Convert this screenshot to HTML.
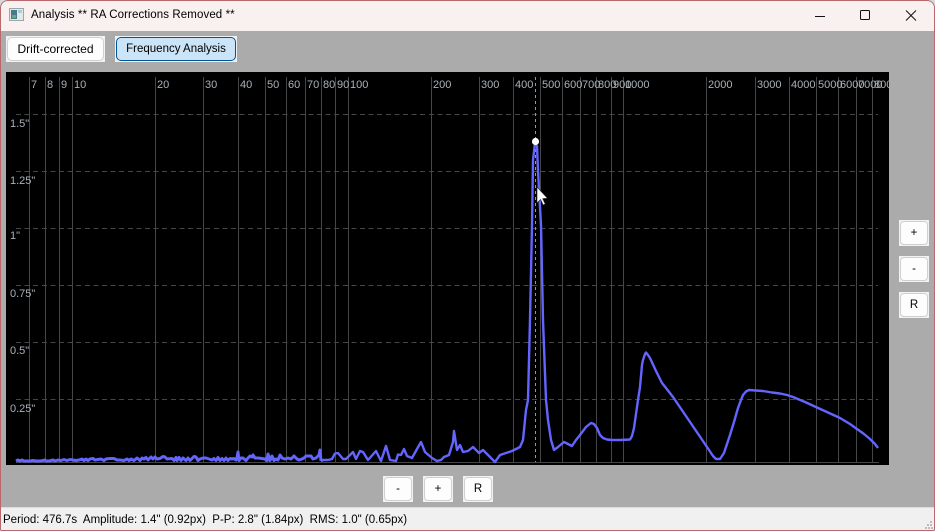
<!DOCTYPE html>
<html><head><meta charset="utf-8"><style>
html,body{margin:0;padding:0;background:#fff;overflow:hidden}
#w{position:relative;width:935px;height:531px;overflow:hidden;background:#d8d8d8}
#win{position:absolute;left:0;top:0;width:933px;height:529px;border:1px solid #b8696e;border-radius:8px 8px 2px 2px;background:#ababab;overflow:hidden}
#title{position:absolute;left:0;top:0;width:933px;height:30px;background:#f9f0f0}
.t{position:absolute;font-family:"Liberation Sans",sans-serif;white-space:nowrap;color:#000}
.h{position:absolute;box-sizing:border-box;background:#f2f2f2;padding:1px}
.b{box-sizing:border-box;width:100%;height:100%;background:#fdfdfd;border:1px solid #d0d0d0;border-radius:4px;font:11.5px "Liberation Sans",sans-serif;text-align:center;color:#000}
#status{position:absolute;left:0;top:506px;width:933px;height:23px;background:#f0f0f0;border-top:1px solid #dcdcdc;box-sizing:border-box}
svg{position:absolute;left:0;top:0}
</style></head><body><div id="w">
<div id="win">
<div id="title"></div>
<svg width="16" height="14" style="left:8px;top:7px"><rect x="0.5" y="0.5" width="14" height="12" fill="#e4e8e8" stroke="#9aa6aa"/><rect x="2" y="2" width="6" height="9" fill="#4a7a86"/><rect x="9" y="2" width="4" height="3" fill="#a8cdd8"/><rect x="3" y="7" width="4" height="3" fill="#6aa884"/></svg>
<div class="t" style="left:30px;top:8px;font-size:11.5px;letter-spacing:.1px">Analysis ** RA Corrections Removed **</div>
<svg width="933" height="30" fill="none" stroke="#111">
<path d="M814 15.5h10" stroke-width="1"/>
<rect x="859.500" y="9.500" width="9" height="9" rx="1"/>
<path d="M905 9.500l10 10M915 9.500l-10 10"/>
</svg>
<div class="h" style="left:5px;top:35px;width:99px;height:26px"><div class="b" style="line-height:22px;font-size:12px;border-radius:5px">Drift-corrected</div></div>
<div class="h" style="left:114px;top:35px;width:122px;height:26px"><div class="b" style="line-height:22px;background:#cce4f7;border-color:#00549a;border-radius:5px">Frequency Analysis</div></div>
<div class="h" style="left:382px;top:475px;width:30px;height:26px"><div class="b" style="line-height:22px">-</div></div>
<div class="h" style="left:422px;top:475px;width:30px;height:26px"><div class="b" style="line-height:22px">+</div></div>
<div class="h" style="left:462px;top:475px;width:30px;height:26px"><div class="b" style="line-height:22px">R</div></div>
<div class="h" style="left:898px;top:219px;width:30px;height:26px"><div class="b" style="line-height:22px">+</div></div>
<div class="h" style="left:898px;top:255px;width:30px;height:26px"><div class="b" style="line-height:22px">-</div></div>
<div class="h" style="left:898px;top:291px;width:30px;height:26px"><div class="b" style="line-height:22px">R</div></div>
<div id="status"><div class="t" style="left:2px;top:6px;font-size:11.5px">Period: 476.7s&nbsp; Amplitude: 1.4" (0.92px)&nbsp; P-P: 2.8" (1.84px)&nbsp; RMS: 1.0" (0.65px)</div></div>
<svg width="8" height="8" style="left:924px;top:520px" fill="#bdbdbd"><rect x="5" y="0" width="2" height="2"/><rect x="2" y="3" width="2" height="2"/><rect x="5" y="3" width="2" height="2"/><rect x="0" y="6" width="2" height="2"/><rect x="3" y="6" width="2" height="2"/><rect x="6" y="6" width="2" height="2"/></svg>
</div>
<svg width="935" height="531" viewBox="0 0 935 531" font-family="Liberation Sans, sans-serif" font-size="11" style="left:0;top:0">
<defs><clipPath id="c"><rect x="6" y="72" width="883" height="393"/></clipPath></defs>
<rect x="6" y="72" width="883" height="393" fill="#000"/>
<g clip-path="url(#c)">
<g stroke="#464646" stroke-width="1" shape-rendering="crispEdges">
<path d="M29.5 77V462M45.5 77V462M59.5 77V462M72.5 77V462M155.5 77V462M203.5 77V462M238.5 77V462M265.5 77V462M286.5 77V462M305.5 77V462M321.5 77V462M335.5 77V462M348.5 77V462M431.5 77V462M479.5 77V462M513.5 77V462M540.5 77V462M562.5 77V462M580.5 77V462M596.5 77V462M611.5 77V462M623.5 77V462M706.5 77V462M755.5 77V462M789.5 77V462M816.5 77V462M838.5 77V462M856.5 77V462M872.5 77V462"/>
<path d="M16 462.5H879"/>
<path stroke-dasharray="5 3.6" d="M16 114.5H878M16 171.5H878M16 228.5H878M16 285.5H878M16 342.5H878M16 399.5H878"/>
</g>
<path d="M535.5 77V462" stroke="#a8a820" stroke-width="1" stroke-dasharray="3 3" shape-rendering="crispEdges"/>
<g fill="#aab2ba">
<text x="31" y="88">7</text><text x="47" y="88">8</text><text x="61" y="88">9</text><text x="74" y="88">10</text><text x="157" y="88">20</text><text x="205" y="88">30</text><text x="240" y="88">40</text><text x="267" y="88">50</text><text x="288" y="88">60</text><text x="307" y="88">70</text><text x="323" y="88">80</text><text x="337" y="88">90</text><text x="350" y="88">100</text><text x="433" y="88">200</text><text x="481" y="88">300</text><text x="515" y="88">400</text><text x="542" y="88">500</text><text x="564" y="88">600</text><text x="582" y="88">700</text><text x="598" y="88">800</text><text x="613" y="88">900</text><text x="625" y="88">1000</text><text x="708" y="88">2000</text><text x="757" y="88">3000</text><text x="791" y="88">4000</text><text x="818" y="88">5000</text><text x="840" y="88">6000</text><text x="858" y="88">7000</text><text x="874" y="88">8000</text>
<text x="10" y="127">1.5"</text><text x="10" y="184">1.25"</text><text x="10" y="239">1"</text><text x="10" y="297">0.75"</text><text x="10" y="354">0.5"</text><text x="10" y="412">0.25"</text>
</g>
<polyline fill="none" stroke="#6464ff" stroke-width="3" stroke-linejoin="round" points="16,461 18,460 20,461 22,460 24,461 27,461 30,461 33,460.500 36,461 40,461 43,460.500 45,460 46,461 49,461 53,460 55,461 58,460 61,460.500 64,459.500 67,460.500 70,459.500 73,460 76,460.500 79,460 82,459 84,460.500 86,459 88,460.500 90,459 93,458.500 95,460 98,459.500 101,459 104,460.500 106,459 110,458.500 114,458.500 117,460 120,460 124,460.500 127,459 129,460.500 131,459 134,460.500 137,458 140,460.500 142,458 144,459 146,457.500 148,460 151,457 153,459 155,457 157,459 160,458.500 163,456.500 165,457 167,459 172,458.500 174,460.500 176,457.500 177,460.500 179,457.500 181,460.500 183,458 186,460.500 188,458 190,460.500 192,458.500 194,456.500 196,457 198,460.500 200,459 203,458 206,458 209,459 212,460 214,458.500 216,460.500 218,457.500 220,460.500 222,458.500 224,460.500 226,458 228,460.500 230,458.500 232,459 234,458.500 236,460 237,458 238,452 239,460.500 241,458 243,458 246,460.500 248,458 250,456 252,457 253,455 255,458 258,458 262,458.500 265,459 267,460.500 268,454 270,460.500 272,456 274,460.500 276,459 278,460 280,455 282,458 285,459 288,458 291,459 294,456 297,459 299,460 302,459 304,458 306,456 308,456 311,456 313,459 316,458 319,455 320,450 321,461"/>
<polyline fill="none" stroke="#6464ff" stroke-width="2.4" stroke-linejoin="round" points="321,461 323,460 328,460 332,459 335,453.500 338,453 343,459 346,459 353,452 356,459 360,451 363,452 368,460 376,451 381,461 386,446 390,460 396,461 398,454.500 401,455 404,449 407,456 412,458 417,449 421,442 425,452 432,458 437,461 441,460 444,457 449,455 453,442 454,431 457,450 460,445 463,452 468,451 473,447 479,453 483,450 495,462 500,455 512,451 520,447 523,440 526,410 528,400 530,320 532,225 533,160 535,143 537,146 538,170 539,190 541,225 543,320 546,400 548,420 551,440 554,450 558,447 564,442 568,444 572,446 576,440 580,435 586,427 591,423 594,424 597,428 600,435 603,438 607,439.500 612,440 621,440 630,439.500 632,436 634,428 638,400 640,387 642,365 643,360 645,354 646,352.500 648,355 650,358 656,371 662,383 666,388 673,397 690,422 707,447 713,456 716,459 720,459 724,453 730,435 734,422 738,408 741,400 743,395 746,391.500 749,390 763,391 772,392.500 780,393.500 787,395 793,397 805,402 817,407.500 828,412.500 840,418 850,424 857,429 864,434 870,439 875,444 878,448"/>
<circle cx="535.500" cy="141.500" r="3.600" fill="#fff"/>
</g>
<path d="M537 187v16l3.600-3.500 2.600 5.500 2-1-2.500-5.400 4.800-.3z" fill="#fff" stroke="#222" stroke-width=".6"/>
</svg>
</div></body></html>
